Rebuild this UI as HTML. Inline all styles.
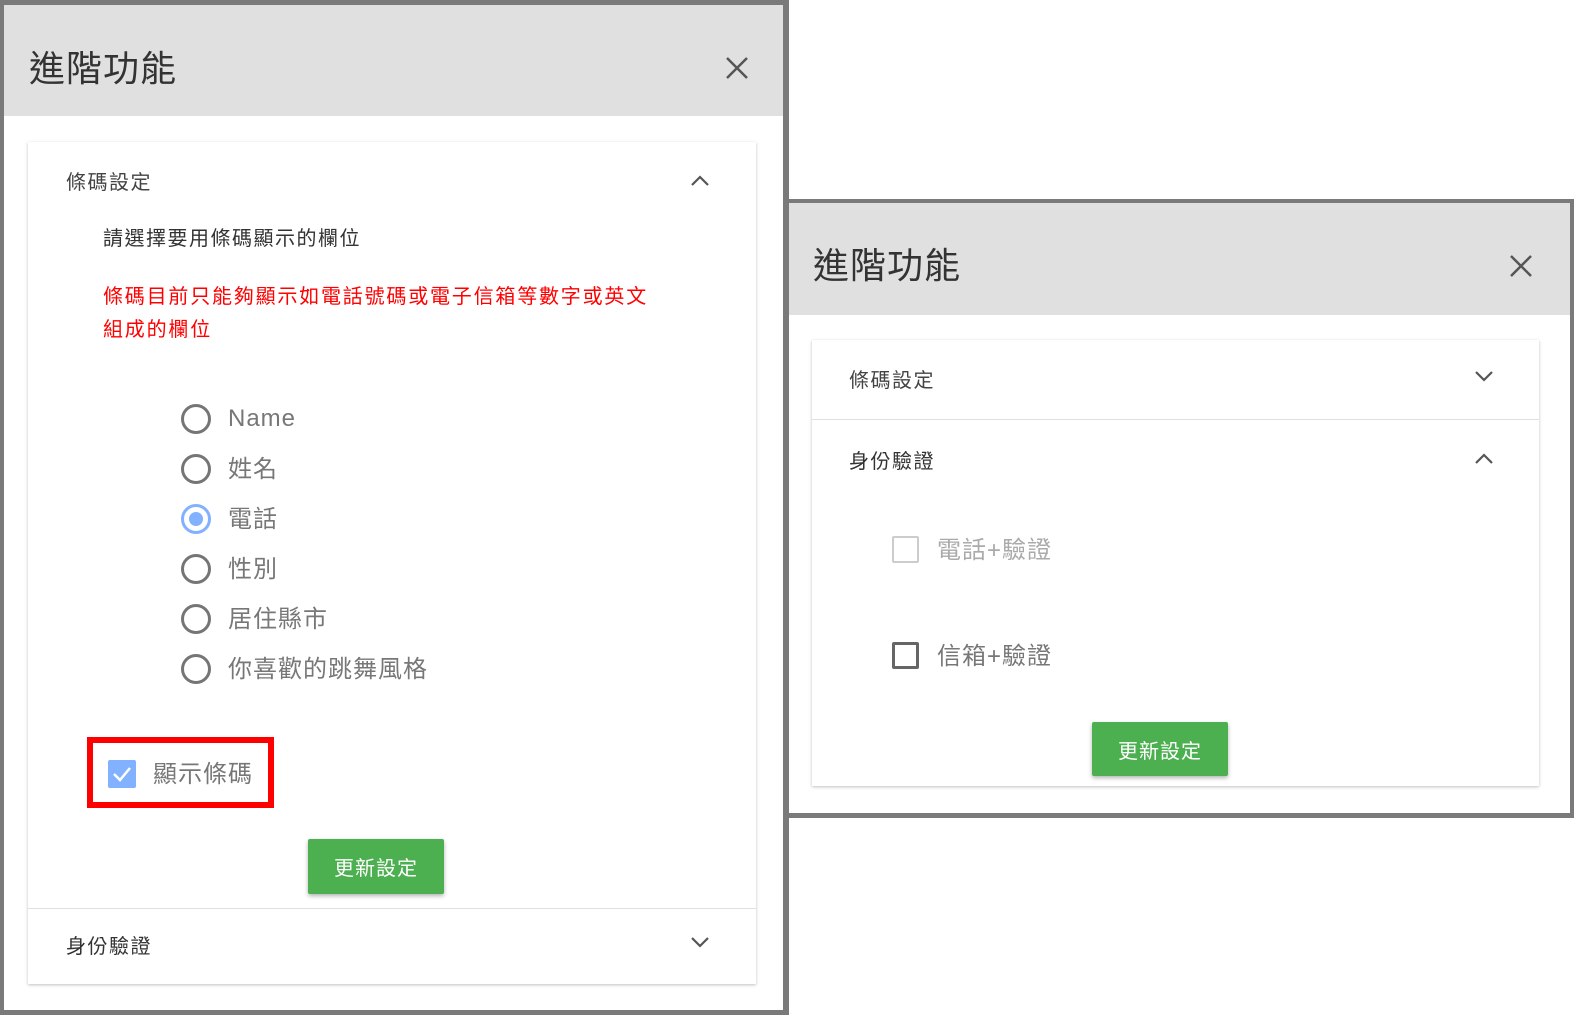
<!DOCTYPE html>
<html><head><meta charset="utf-8"><style>
*{margin:0;padding:0;box-sizing:border-box}
body{width:1576px;height:1019px;background:#fff;position:relative;overflow:hidden;font-family:"Liberation Sans","Noto Sans CJK TC",sans-serif}
.a{position:absolute}
.t{position:absolute;white-space:nowrap;line-height:1}
.card{position:absolute;background:#fff;box-shadow:0 1px 3px rgba(0,0,0,.25)}
.radio{position:absolute;width:30px;height:30px;border:3px solid #757575;border-radius:50%}
.btn{position:absolute;background:#4caf50;color:#fff;font-size:20px;letter-spacing:1px;display:flex;align-items:center;justify-content:center;border-radius:2px;box-shadow:0 2px 4px rgba(0,0,0,.3)}
.lbl{color:#777;font-size:24px;letter-spacing:1px}
.h{font-size:20px;letter-spacing:1.5px}
</style></head><body>
<div class="a" style="left:0;top:0;width:789px;height:1015px;background:#7a7a7a"></div>
<div class="a" style="left:4px;top:5px;width:779px;height:1005px;background:#fff"></div>
<div class="a" style="left:4px;top:5px;width:779px;height:111px;background:#e0e0e0"></div>
<div class="t" style="left:29px;top:51px;font-size:36px;color:#333;letter-spacing:1px">進階功能</div>
<svg class="a" style="left:725px;top:56px" width="24" height="24"><path d="M2 2L22 22M22 2L2 22" stroke="#555" stroke-width="2.5"/></svg>
<div class="card" style="left:28px;top:142px;width:728px;height:842px"></div>
<div class="t h" style="left:66px;top:173px;color:#444">條碼設定</div>
<svg class="a" style="left:690px;top:173px" width="20" height="14"><path d="M2 12L10 4L18 12" stroke="#555" stroke-width="2.2" fill="none"/></svg>
<div class="t h" style="left:103px;top:229px;color:#333">請選擇要用條碼顯示的欄位</div>
<div class="t" style="left:103px;top:287px;font-size:20px;color:#f00;letter-spacing:1.8px">條碼目前只能夠顯示如電話號碼或電子信箱等數字或英文</div>
<div class="t" style="left:103px;top:320px;font-size:20px;color:#f00;letter-spacing:1.8px">組成的欄位</div>
<div class="radio" style="left:181px;top:404px"></div><div class="t lbl" style="left:228px;top:407px">Name</div>
<div class="radio" style="left:181px;top:454px"></div><div class="t lbl" style="left:228px;top:458px">姓名</div>
<div class="radio" style="left:181px;top:504px;border-color:#82b1ff"><div class="a" style="left:5px;top:5px;width:14px;height:14px;border-radius:50%;background:#82b1ff"></div></div><div class="t lbl" style="left:228px;top:508px">電話</div>
<div class="radio" style="left:181px;top:554px"></div><div class="t lbl" style="left:228px;top:558px">性別</div>
<div class="radio" style="left:181px;top:604px"></div><div class="t lbl" style="left:228px;top:608px">居住縣市</div>
<div class="radio" style="left:181px;top:654px"></div><div class="t lbl" style="left:228px;top:658px">你喜歡的跳舞風格</div>
<div class="a" style="left:87px;top:737px;width:187px;height:71px;border:6px solid #f00"></div>
<div class="a" style="left:108px;top:760px;width:28px;height:28px;background:#82b1ff;border-radius:2px"></div>
<svg class="a" style="left:108px;top:760px" width="28" height="28"><path d="M6 14L12 20L22 8" stroke="#fff" stroke-width="2.5" fill="none"/></svg>
<div class="t lbl" style="left:153px;top:763px">顯示條碼</div>
<div class="btn" style="left:308px;top:839px;width:136px;height:55px">更新設定</div>
<div class="a" style="left:28px;top:908px;width:728px;height:1px;background:#e0e0e0"></div>
<div class="t h" style="left:66px;top:937px;color:#333">身份驗證</div>
<svg class="a" style="left:690px;top:936px" width="20" height="14"><path d="M2 2L10 10L18 2" stroke="#555" stroke-width="2.2" fill="none"/></svg>
<div class="a" style="left:785px;top:199px;width:789px;height:619px;background:#7a7a7a"></div>
<div class="a" style="left:789px;top:203px;width:781px;height:610px;background:#fff"></div>
<div class="a" style="left:789px;top:203px;width:781px;height:112px;background:#e0e0e0"></div>
<div class="t" style="left:813px;top:248px;font-size:36px;color:#333;letter-spacing:1px">進階功能</div>
<svg class="a" style="left:1509px;top:254px" width="24" height="24"><path d="M2 2L22 22M22 2L2 22" stroke="#555" stroke-width="2.5"/></svg>
<div class="card" style="left:812px;top:340px;width:727px;height:446px"></div>
<div class="t h" style="left:849px;top:371px;color:#444">條碼設定</div>
<svg class="a" style="left:1474px;top:370px" width="20" height="14"><path d="M2 2L10 10L18 2" stroke="#555" stroke-width="2.2" fill="none"/></svg>
<div class="a" style="left:812px;top:419px;width:727px;height:1px;background:#e0e0e0"></div>
<div class="t h" style="left:849px;top:452px;color:#333">身份驗證</div>
<svg class="a" style="left:1474px;top:451px" width="20" height="14"><path d="M2 12L10 4L18 12" stroke="#555" stroke-width="2.2" fill="none"/></svg>
<div class="a" style="left:892px;top:536px;width:27px;height:27px;border:2px solid #ccc;border-radius:2px"></div>
<div class="t" style="left:937px;top:539px;font-size:24px;color:#aaa;letter-spacing:1px">電話+驗證</div>
<div class="a" style="left:892px;top:642px;width:27px;height:27px;border:3px solid #666;border-radius:2px"></div>
<div class="t lbl" style="left:937px;top:645px">信箱+驗證</div>
<div class="btn" style="left:1092px;top:722px;width:136px;height:54px">更新設定</div>
</body></html>
